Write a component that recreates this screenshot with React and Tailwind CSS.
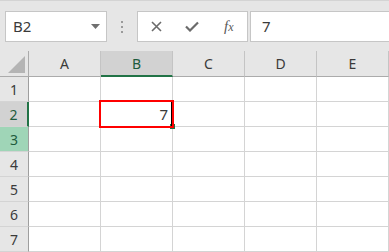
import React from "react"

const cols = ["A", "B", "C", "D", "E"]
const rows = [1, 2, 3, 4, 5, 6, 7]

const Toolbar = () => {
  return (
    <div className="flex items-start h-[51px] pt-[10px] bg-[#e6e6e6] border-t border-[#d4d4d4]">
      <div className="ml-[5px] w-[102px] h-[31px] bg-white border border-[#c6c6c6] flex items-center justify-between pl-[7px] pr-[6px]">
        <span className="text-[15px] text-[#3a3a3a]">B2</span>
        <svg width="9" height="5" viewBox="0 0 9 5">
          <path d="M0 0 L9 0 L4.5 5 Z" fill="#6f6f6f" />
        </svg>
      </div>
      <div className="w-[30px] h-[31px] flex flex-col items-center justify-center gap-[3px]">
        <span className="w-[2px] h-[2px] bg-[#9a9a9a]" />
        <span className="w-[2px] h-[2px] bg-[#9a9a9a]" />
        <span className="w-[2px] h-[2px] bg-[#9a9a9a]" />
      </div>
      <div className="w-[111px] h-[31px] bg-white border border-[#c6c6c6] flex items-center">
        <div className="w-[37px] flex justify-center">
          <svg width="11" height="11" viewBox="0 0 11 11">
            <path d="M1 1 L10 10 M10 1 L1 10" stroke="#6b6b6b" strokeWidth="1.6" />
          </svg>
        </div>
        <div className="w-[37px] flex justify-center">
          <svg width="14" height="11" viewBox="0 0 14 11">
            <path d="M1 5.5 L5 9.5 L13 1.5" stroke="#6b6b6b" strokeWidth="2.2" fill="none" />
          </svg>
        </div>
        <div className="w-[37px] flex justify-center">
          <span className="font-['Liberation_Serif',serif] italic text-[15px] text-[#5a5a5a] leading-none">f<span className="text-[12px]">x</span></span>
        </div>
      </div>
      <div className="ml-[2px] flex-1 h-[31px] bg-white border border-[#c6c6c6] border-r-0 flex items-center pl-[11px]">
        <span className="text-[15px] text-[#3a3a3a]">7</span>
      </div>
    </div>
  )
}

const App = () => {
  return (
    <div className="relative w-[389px] h-[252px] overflow-hidden bg-white font-['Noto_Sans',sans-serif]">
      <Toolbar />
      <div className="flex h-[26px] bg-[#e6e6e6]">
        <div className="w-[29px] h-[26px] border-r border-b border-[#ababab] flex items-end justify-end pr-[3px] pb-[3px]">
          <svg width="17" height="17" viewBox="0 0 17 17">
            <path d="M17 0 L17 17 L0 17 Z" fill="#b4b4b4" />
          </svg>
        </div>
        {cols.map(c => (
          <div
            key={c}
            className={`w-[72px] h-[26px] border-r border-[#c4c4c4] flex items-center justify-center text-[14px] ${c === 'B' ? 'bg-[#d2d2d2] border-b-2 border-b-[#217346] text-[#1e5b3d]' : 'border-b border-b-[#ababab] text-[#3a3a3a]'}`}
          >
            {c}
          </div>
        ))}
      </div>
      {rows.map(r => (
        <div key={r} className="flex h-[25px]">
          <div
            className={`w-[29px] h-[25px] border-b border-[#d4d4d4] flex items-center justify-center text-[14px]
            ${r === 2 ? 'bg-[#d2d2d2] border-r-2 border-r-[#217346] text-[#1e5b3d]' : r === 3 ? 'bg-[#9fd5b7] border-r border-r-[#9e9e9e] text-[#1e5b3d]' : 'bg-[#e6e6e6] border-r border-r-[#9e9e9e] text-[#3a3a3a]'}`}
          >
            {r}
          </div>
          {cols.map(c => (
            <div key={c} className="w-[72px] h-[25px] border-r border-b border-[#d4d4d4] flex items-center justify-end pr-[4px] text-[15px] text-[#3a3a3a]">
              {r === 2 && c === 'B' ? '7' : ''}
            </div>
          ))}
        </div>
      ))}
      <div className="absolute left-[170px] top-[124px] w-[5px] h-[5px] bg-[#217346]" />
      <div className="absolute left-[99px] top-[100px] w-[75px] h-[28px] border-2 border-[#ff0000]" />
      <div className="absolute left-[171px] top-[102px] w-[1px] h-[24px] bg-black" />
    </div>
  )
}

export default App
